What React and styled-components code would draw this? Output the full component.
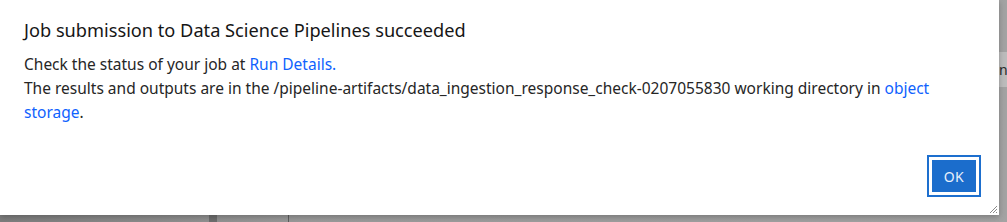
import React from "react";
import styled, { createGlobalStyle } from "styled-components";

const GlobalStyle = createGlobalStyle`
  html, body {
    margin: 0;
    padding: 0;
    background: #8f8f8f;
    font-family: "Noto Sans", "Open Sans", sans-serif;
  }
`;

// page behind the modal (seen through the overlay)
const Screen = styled.div`
  width: 1007px;
  height: 222px;
  overflow: hidden;
  display: grid;
  grid-template-columns: 999px 8px;
  grid-template-rows: 215px 7px;
  background: linear-gradient(90deg, #7d7d7d 0%, #9a9a9a 30%, #a3a3a3 100%);
`;

const Dialog = styled.div`
  background: #ffffff;
  display: flex;
  flex-direction: column;
  padding: 18px 24px 0 24px;
  box-sizing: border-box;
  position: relative;
  box-shadow: 0 2px 6px rgba(0, 0, 0, 0.25);
  z-index: 1;
`;

const Title = styled.h2`
  margin: 0;
  font-size: 18.2px;
  font-weight: 400;
  line-height: 24px;
  color: #161616;
`;

const Body = styled.div`
  margin-top: 10px;
  font-size: 15.5px;
  line-height: 24px;
  color: #262626;
  p {
    margin: 0;
  }
`;

const Link = styled.a`
  color: #0f62fe;
  text-decoration: none;
  cursor: pointer;
`;

const Footer = styled.div`
  margin-top: auto;
  margin-right: -6px;
  display: flex;
  justify-content: flex-end;
  padding-bottom: 18px;
`;

const FocusRing = styled.div`
  border: 2px solid #1d6fce;
  padding: 3px;
  display: flex;
`;

const OkButton = styled.button`
  width: 44px;
  height: 32px;
  border: none;
  background: #1b6dcc;
  color: #e8f0fb;
  font-family: inherit;
  font-size: 14px;
  letter-spacing: 0.5px;
  padding: 0;
  cursor: pointer;
`;

const Grip = styled.svg`
  position: absolute;
  right: 1px;
  bottom: 1px;
`;

const SideStrip = styled.div`
  display: flex;
  flex-direction: column;
  padding-top: 52px;
`;

const SideTab = styled.div`
  height: 35px;
  background: #bcbcbc;
  color: #2a2a2a;
  font-size: 14px;
  line-height: 35px;
  overflow: hidden;
  white-space: nowrap;
`;

const BottomStrip = styled.div`
  grid-column: 1 / span 2;
  display: grid;
  grid-template-columns: 209px 8px 71px 1px 1fr;
`;

const Shade = styled.div`
  background: ${(p) => p.$tone};
`;

export default function App() {
  return (
    <>
      <GlobalStyle />
      <Screen>
        <Dialog role="dialog" aria-labelledby="job-title">
          <Title id="job-title">Job submission to Data Science Pipelines succeeded</Title>
          <Body>
            <p>
              Check the status of your job at <Link>Run Details.</Link>
            </p>
            <p>
              The results and outputs are in the
              /pipeline-artifacts/data_ingestion_response_check-0207055830 working directory in{" "}
              <Link>object storage</Link>.
            </p>
          </Body>
          <Footer>
            <FocusRing>
              <OkButton>OK</OkButton>
            </FocusRing>
          </Footer>
          <Grip width="9" height="9" viewBox="0 0 9 9">
            <path d="M8 1 L1 8 M8 4 L4 8 M8 7 L7 8" stroke="#8a8a8a" strokeWidth="1" />
          </Grip>
        </Dialog>
        <SideStrip>
          <SideTab>n</SideTab>
        </SideStrip>
        <BottomStrip>
          <div />
          <Shade $tone="#6e6e6e" />
          <div />
          <Shade $tone="#5e5e5e" />
          <div />
        </BottomStrip>
      </Screen>
    </>
  );
}
